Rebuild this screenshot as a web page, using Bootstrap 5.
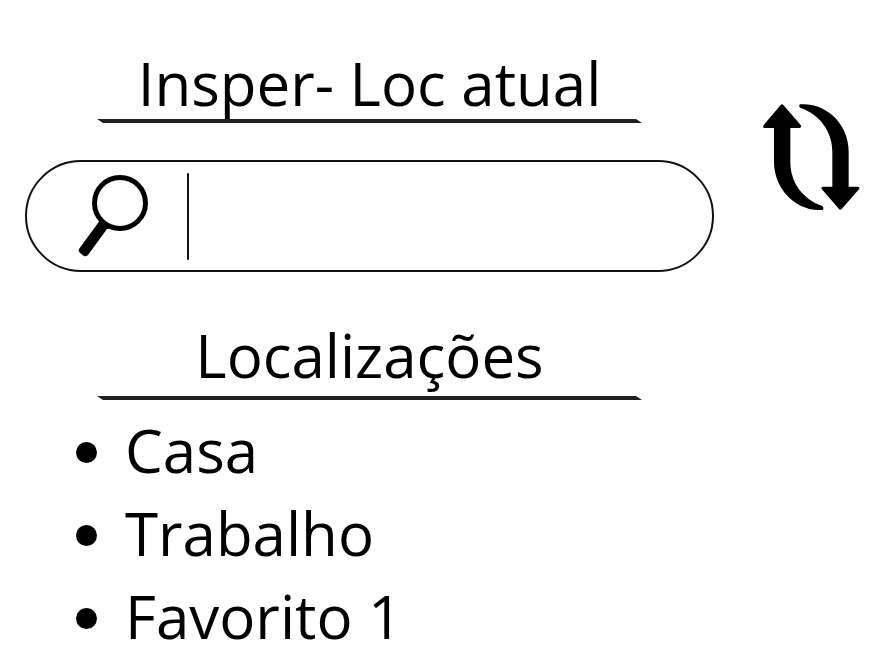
<!DOCTYPE html>
<html lang="pt-BR">
<head>
<meta charset="utf-8">
<meta name="viewport" content="width=device-width, initial-scale=1">
<title>Localizações</title>
<link href="https://cdn.jsdelivr.net/npm/bootstrap@5.3.0/dist/css/bootstrap.min.css" rel="stylesheet">
<style>
  body { font-family: "Open Sans", sans-serif; color: #000; background: #fff; }
  .screen { padding: 47px 26px 0 25px; gap: 49px; }
  .heading { font-size: 60px; line-height: 72px; font-weight: 400; }
  .rule { height: 4px; margin: 0 72px; background: #231f20; clip-path: polygon(0 0, calc(100% - 6px) 0, 100% 100%, 6px 100%); }
  .search { height: 112px; margin: 37px 0 47px; border: 2px solid #111; border-radius: 56px; padding-left: 51px; }
  .search-divider { width: 2px; height: 87px; margin-left: 38px; background: #111; border-radius: 1px; }
  .search input { font-size: 40px; padding: 0 32px 0 16px; }
  .places-title { padding-bottom: 5px; }
  .places { margin: 9px 0 0 51px; font-size: 60px; line-height: 83px; }
  .places li { gap: 28px; }
  .places li::before { content: ""; width: 21px; height: 21px; border-radius: 50%; background: #000; margin-top: 4px; }
  .swap { margin-top: 57px; }
</style>
</head>
<body>
<div class="screen d-flex align-items-start">
  <main class="flex-grow-1">
    <h1 class="heading text-center text-nowrap m-0">Insper- Loc atual</h1>
    <div class="rule"></div>
    <form class="search d-flex align-items-center" role="search">
      <label for="busca" class="d-flex">
        <svg width="71" height="82" viewBox="0 -1 71 82" role="img" aria-label="Buscar">
          <circle cx="42" cy="27" r="25.5" fill="none" stroke="#000" stroke-width="5"/>
          <path d="M21 41L22 44L20 47L1 73Q0 75 2 77L6 80Q8 81 10 79L29 53L34 52Z"/>
        </svg>
      </label>
      <span class="search-divider"></span>
      <input id="busca" type="search" class="form-control border-0 bg-transparent shadow-none flex-fill h-100">
    </form>
    <h2 class="heading places-title text-center m-0">Localizações</h2>
    <div class="rule"></div>
    <ul class="places list-unstyled">
      <li class="d-flex align-items-center">Casa</li>
      <li class="d-flex align-items-center">Trabalho</li>
      <li class="d-flex align-items-center">Favorito 1</li>
    </ul>
  </main>
  <button type="button" class="swap btn p-0 border-0 rounded-0 d-flex flex-shrink-0" aria-label="Trocar">
    <svg width="97" height="106" viewBox="38 42 291 318" aria-hidden="true">
      <path d="M91 45Q95 41 99 45L151 105Q155 113 147 114H120V215C120 275 155 326 216 348Q221 352 218 359Q215 361 205 360C130 359 71 292 71 216V114H43Q36 113 40 105Z"/>
      <path d="M274 357Q270 361 266 357L214 297Q211 291 218 290H246V185C246 124 208 73 149 53Q144 48 149 43Q154 42 164 43C238 46 295 110 295 184V290H322Q330 291 326 298Z"/>
    </svg>
  </button>
</div>
<script src="https://cdn.jsdelivr.net/npm/bootstrap@5.3.0/dist/js/bootstrap.bundle.min.js"></script>
</body>
</html>
